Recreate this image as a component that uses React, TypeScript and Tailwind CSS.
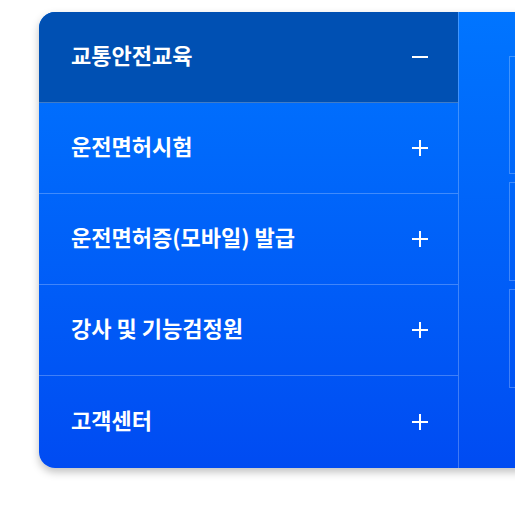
const menus = [
  { label: '교통안전교육', open: true },
  { label: '운전면허시험', open: false },
  { label: '운전면허증(모바일) 발급', open: false },
  { label: '강사 및 기능검정원', open: false },
  { label: '고객센터', open: false },
];

function Toggle({ open }: { open: boolean }) {
  return (
    <svg width="16" height="16" viewBox="0 0 16 16" className="shrink-0">
      <path d="M0 8h16" stroke="white" strokeWidth="2" />
      {!open && <path d="M8 0v16" stroke="white" strokeWidth="2" />}
    </svg>
  );
}

export default function App() {
  return (
    <div
      className="w-[515px] h-[509px] overflow-hidden bg-white"
      style={{ fontFamily: '"Noto Sans CJK KR", "Noto Sans", sans-serif' }}
    >
      <div className="ml-[39px] mt-[12px] w-[620px] h-[456px] flex rounded-l-[16px] overflow-hidden bg-gradient-to-b from-[#0075ff] to-[#004bf2] shadow-[0_4px_8px_rgba(0,0,0,0.25)]">
        {/* accordion menu */}
        <ul className="w-[420px] flex flex-col border-r border-white/25">
          {menus.map((m, i) => (
            <li
              key={m.label}
              className={`h-[91px] flex items-center justify-between pl-[32px] pr-[30px] ${
                i < menus.length - 1 ? 'border-b border-white/25' : 'flex-1'
              } ${m.open ? 'bg-[#0050b3]' : ''}`}
            >
              <span className="text-white text-[22px] leading-none font-bold -translate-y-[3px]">{m.label}</span>
              <Toggle open={m.open} />
            </li>
          ))}
        </ul>

        {/* content panel */}
        <div className="flex-1 pl-[50px] pt-[44px] flex flex-col gap-[8px]">
          <div className="h-[118px] border border-white/25" />
          <div className="h-[99px] border border-white/25" />
          <div className="h-[99px] border border-white/25" />
        </div>
      </div>
    </div>
  );
}
